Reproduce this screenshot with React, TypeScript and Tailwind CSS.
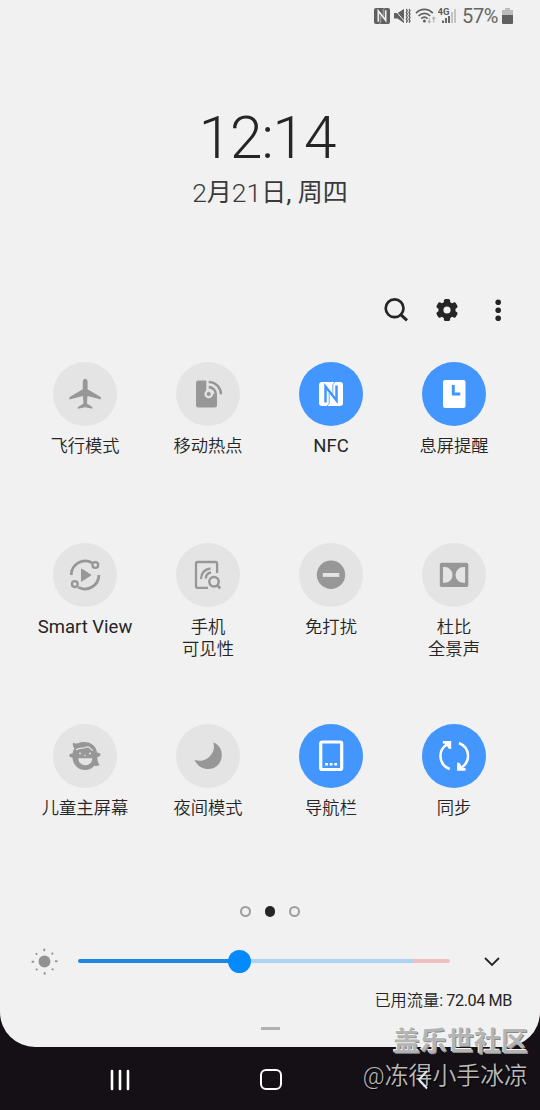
import type { ReactNode } from 'react';

const GREY = '#979797';
const BLUE = '#4296fd';
const OFF = '#e4e4e4';

function NfcMark({ size, fg, bg }: { size: number; fg: string; bg: string }) {
  return (
    <svg width={size} height={size} viewBox="0 0 24 24" fill="none">
      <rect width="24" height="24" rx="3" fill={fg} />
      <path d="M6.500 20.500V4.500L17.500 18.500V3.500" stroke={bg} strokeWidth="2.500" />
      <path d="M10.200 11V21.500L8 24M13.800 12V2.500L16 0" stroke={bg} strokeWidth=".8" />
    </svg>
  );
}

function Glyph({ children }: { children: ReactNode }) {
  return (
    <svg width="64" height="64" viewBox="-.5 -.5 64 64" fill="none">
      {children}
    </svg>
  );
}

const icons: Record<string, ReactNode> = {
  plane: (
    <Glyph>
      <path
        d="M31.700 16.200c-1.500 0-2.400 1.400-2.400 3.200v7.400L17 34c-1 .6-1.300 1.400-1.100 2.900l13.500-3.300.6 7.400-5 3.200c-.6.4-.7 1-.6 2l7.300-1.400 7.300 1.400c.1-1-.1-1.600-.6-2l-5-3.200.6-7.400 13.400 3.300c.2-1.500-.1-2.300-1.100-2.900l-12.200-7.200v-7.400c0-1.800-.9-3.200-2.400-3.200z"
        fill={GREY}
      />
    </Glyph>
  ),
  hotspot: (
    <Glyph>
      <rect x="19.500" y="18" width="21" height="27" rx="2.300" fill={GREY} />
      <path d="M29.800 16h12v15.500h-10l-2-2z" fill={OFF} />
      <circle cx="32.200" cy="31.500" r="4.300" fill={OFF} />
      <circle cx="32.200" cy="31.500" r="1.900" fill={GREY} stroke={GREY} strokeWidth=".4" />
      <path d="M32.200 24.600a7 7 0 0 1 7 7M32.200 19.500a12.200 12.200 0 0 1 12.200 12.200" stroke={GREY} strokeWidth="2.600" />
    </Glyph>
  ),
  nfc: <NfcMark size={24} fg="#fff" bg={BLUE} />,
  clock: (
    <Glyph>
      <rect x="20.500" y="17.500" width="22.500" height="28" rx="2" fill="#fff" />
      <path d="M30.800 22.500v9h7" stroke={BLUE} strokeWidth="3" />
    </Glyph>
  ),
  smartview: (
    <Glyph>
      <path d="M17.800 31.500A14 14 0 0 1 38.600 19.200M45.400 31.500A14 14 0 0 1 24.500 43.600" stroke={GREY} strokeWidth="2.800" />
      <circle cx="41.800" cy="21.500" r="2.900" stroke={GREY} strokeWidth="2.300" />
      <circle cx="21.300" cy="40.600" r="2.900" stroke={GREY} strokeWidth="2.300" />
      <path d="M28 25.500v12.200l9.500-6.100z" fill={GREY} stroke={GREY} strokeWidth="1" strokeLinejoin="round" />
    </Glyph>
  ),
  visible: (
    <Glyph>
      <path d="M40.600 29.500V20a1.500 1.500 0 0 0-1.500-1.500H21a1.500 1.500 0 0 0-1.500 1.500v22.800a1.500 1.500 0 0 0 1.500 1.500h10.500" stroke={GREY} strokeWidth="2.300" />
      <path d="M24.500 35.500c.2-5.500 3.500-9.500 9.500-10.500M29.300 35c.2-3.500 2-5.500 5.200-6" stroke={GREY} strokeWidth="2.300" />
      <circle cx="37.500" cy="38.200" r="4.700" stroke={GREY} strokeWidth="2.500" />
      <path d="M40.500 41.500l3.200 3.300" stroke={GREY} strokeWidth="2.600" />
    </Glyph>
  ),
  dnd: (
    <Glyph>
      <circle cx="31.500" cy="31.300" r="14.200" fill={GREY} />
      <rect x="23.300" y="29.500" width="16.500" height="3.900" fill={OFF} />
    </Glyph>
  ),
  dolby: (
    <Glyph>
      <rect x="17.300" y="19.300" width="28.500" height="24.200" rx="1.800" fill={GREY} />
      <path d="M20.500 23.600h1.800a7.800 7.800 0 0 1 0 15.600h-1.800zM42.600 23.600h-1.800a7.800 7.800 0 0 0 0 15.600h1.800z" fill={OFF} />
    </Glyph>
  ),
  kids: (
    <Glyph>
      <path
        d="M19.500 18c1.500 1.300 3 1.200 5 .7 4-1.700 10.500-1.600 14 1 2.700 1.800 4.500 4.800 5 8.300 2 .2 3.500.9 3.500 2.200 0 1.200-1.300 2-3.100 2.200 0 3.200.2 5 2.300 8.200-2 1-4 1.200-5.500.6-2.500 3-5.500 4.300-9.200 4.300-6.800 0-12-5.200-12.500-12.200-1.800-.2-3.300-.9-3.300-2.200 0-1.300 1.300-2.200 3.300-2.200.3-2 1-3.700 2-5.200-1.500-1.200-2-3-1.500-5.200z"
        fill={GREY}
      />
      <path d="M22.500 25.500c3.500-3 6.500-1 9.500-2.500 1.500-.8 3-.8 4 .2 1.200 1.200 2 2.300 3.500 2.800" stroke={OFF} strokeWidth="1.200" />
      <circle cx="26.500" cy="29" r="1" fill={OFF} />
      <circle cx="36.500" cy="29" r="1" fill={OFF} />
      <circle cx="31.500" cy="31" r=".8" fill={OFF} />
      <path d="M24.800 33.700h14c-.2 4.300-2.800 7-7 7s-6.800-2.700-7-7z" fill={OFF} />
    </Glyph>
  ),
  moon: (
    <Glyph>
      <path d="M36.800 17.800c5.500 2.500 8.500 7 8.500 12.700 0 7.800-5.700 14-13.300 14-6.300 0-11.500-3.300-14-9.200 4 1.600 8.500 1.200 12-.8 6-3.500 8.800-10 6.800-16.700z" fill={GREY} />
    </Glyph>
  ),
  navbar: (
    <Glyph>
      <rect x="21.200" y="17.500" width="21" height="27.500" rx="1.500" stroke="#fff" strokeWidth="3.200" />
      <path d="M25.600 38.500h2.800v2.600h-2.800zM30.200 38.500h2.800v2.600h-2.800zM34.800 38.500h2.800v2.600h-2.800z" fill="#fff" />
    </Glyph>
  ),
  sync: (
    <Glyph>
      <path d="M27.200 44.500c-5.500-2.200-9.300-7-9.300-13.200 0-4.300 2.500-8.600 6.200-11.300M36.500 18.500c5.300 2.200 9.100 7 9.100 13 0 4.500-2.500 8.700-6 11.300" stroke="#fff" strokeWidth="2.500" />
      <path d="M20.300 16.400h8.400v8.200l-2.500-.3-3-4.900-2.900-.3zM43 46.300h-8.400v-8.200l2.500.3 3 4.900 2.900.3z" fill="#fff" />
    </Glyph>
  ),
};

type Tile = { icon: string; label: string[]; on?: boolean; latin?: boolean };

const tiles: Tile[] = [
  { icon: 'plane', label: ['飞行模式'] },
  { icon: 'hotspot', label: ['移动热点'] },
  { icon: 'nfc', label: ['NFC'], on: true, latin: true },
  { icon: 'clock', label: ['息屏提醒'], on: true },
  { icon: 'smartview', label: ['Smart View'], latin: true },
  { icon: 'visible', label: ['手机', '可见性'] },
  { icon: 'dnd', label: ['免打扰'] },
  { icon: 'dolby', label: ['杜比', '全景声'] },
  { icon: 'kids', label: ['儿童主屏幕'] },
  { icon: 'moon', label: ['夜间模式'] },
  { icon: 'navbar', label: ['导航栏'], on: true },
  { icon: 'sync', label: ['同步'], on: true },
];

function StatusBar() {
  return (
    <div className="flex h-8 items-center justify-end pr-[27px] text-[#666]">
      <NfcMark size={16} fg="#606060" bg="#f1f1f1" />
      <svg className="ml-[4px]" width="17" height="16" viewBox="0 0 17 16">
        <path d="M0 5h3.500L10 1v14l-6.500-4.500H0z" fill="#606060" />
        <path d="M.500 1.500l11 13" stroke="#f1f1f1" strokeWidth="1" />
        <path d="M12.300 1l1 1.700-1 1.700 1 1.700-1 1.700 1 1.700-1 1.700 1 1.700-1 1.700M15 1l1 1.700-1 1.700 1 1.700-1 1.700 1 1.700-1 1.700 1 1.700-1 1.700" fill="none" stroke="#606060" strokeWidth="1.300" />
      </svg>
      <svg className="ml-[4px]" width="23" height="18" viewBox="0 0 23 18">
        <path d="M1 6.200c4.800-5 12-5 16.800 0M3.600 9c3.400-3.500 8.200-3.500 11.600 0M6.300 11.600c1.800-1.900 4.400-1.900 6.200 0" fill="none" stroke="#606060" strokeWidth="1.700" />
        <circle cx="9.400" cy="14" r="1.500" fill="#606060" />
        <path d="M14.300 11v4.500M12.800 14l1.500 1.800 1.500-1.800M18.700 15.500v-5M17.200 12l1.500-1.800 1.500 1.800" fill="none" stroke="#b0b0b0" strokeWidth="1.100" />
      </svg>
      <svg width="19" height="18" viewBox="0 0 19 18">
        <text x="-.5" y="8" fontFamily="Roboto" fontSize="9.500" fontWeight="700" fill="#5c5c5c">4G</text>
        <path d="M5 13.500v2.500M8 11v5M11 9v7" stroke="#606060" strokeWidth="1.900" />
        <path d="M14 5v11M17 2v14" stroke="#c3c3c3" strokeWidth="1.900" />
      </svg>
      <span className="ml-[5px] text-[20px] leading-8 tracking-[-0.4px]">57%</span>
      <svg className="ml-[4px]" width="11" height="16" viewBox="0 0 11 16">
        <path d="M3 0h5v2h3v6H0V2h3z" fill="#bbb" />
        <path d="M0 7h11v8a1 1 0 0 1-1 1H1a1 1 0 0 1-1-1z" fill="#606060" />
      </svg>
    </div>
  );
}

function Toolbar() {
  return (
    <div className="flex h-[30px] items-center justify-end gap-[21px] pr-[27px]">
      <svg width="30" height="30" viewBox="0 0 30 30">
        <circle cx="13.600" cy="13.300" r="8.900" fill="none" stroke="#252525" strokeWidth="2.700" />
        <path d="M19.700 19.600l6.300 5.700" stroke="#252525" strokeWidth="3" />
      </svg>
      <svg width="30" height="30" viewBox="0 0 30 30">
        <g fill="#252525">
          <circle cx="15" cy="15" r="8.600" />
          <rect x="11.900" y="3.900" width="6.200" height="22.200" rx="1.700" />
          <rect x="11.900" y="3.900" width="6.200" height="22.200" rx="1.700" transform="rotate(60 15 15)" />
          <rect x="11.900" y="3.900" width="6.200" height="22.200" rx="1.700" transform="rotate(120 15 15)" />
        </g>
        <circle cx="15" cy="15" r="3.600" fill="#f1f1f1" />
      </svg>
      <svg width="30" height="30" viewBox="0 0 30 30" fill="#252525">
        <circle cx="15.200" cy="7.200" r="2.800" />
        <circle cx="15.200" cy="15.200" r="2.800" />
        <circle cx="15.200" cy="23.200" r="2.800" />
      </svg>
    </div>
  );
}

function QuickTile({ icon, label, on, latin }: Tile) {
  return (
    <div className="flex h-[181px] flex-col items-center">
      <div className={`flex size-[64px] shrink-0 items-center justify-center rounded-full ${on ? 'bg-[#4296fd]' : 'bg-[#e4e4e4]'}`}>
        {icons[icon]}
      </div>
      <div className={`mt-[8.500px] text-center leading-[22px] whitespace-nowrap text-[#252525] ${latin ? 'text-[18.500px]' : 'text-[17.300px] font-[350]'}`}>
        {label.map((line) => (
          <div key={line}>{line}</div>
        ))}
      </div>
    </div>
  );
}

function Brightness() {
  return (
    <div className="flex h-[30px] items-center">
      <svg className="ml-[29px]" width="31" height="30" viewBox="0 0 31 30" fill="#929292">
        <circle cx="15.500" cy="15.500" r="5.900" />
        <g stroke="#929292" strokeWidth="2" strokeLinecap="round">
          <path d="M15.300 3.500v.800M15.700 26.900v.800M3.500 15.800h.800M26.800 15.300h.800M7.400 7.900l.2.200M23.200 7.700l.2-.2M7.600 23.600l.2-.2M23.500 23.200l.2.200" />
        </g>
      </svg>
      <div className="relative ml-[17.500px] flex h-1 w-[372px] overflow-visible">
        <div className="w-[161px] rounded-l-full bg-[#1d86e2]" />
        <div className="w-[175px] bg-[#aed3f0]" />
        <div className="w-[36px] rounded-r-full bg-[#efc0c0]" />
        <div className="absolute top-[-9px] left-[150.500px] size-[22.500px] rounded-full bg-[#038aff]" />
      </div>
      <svg className="ml-[33.500px]" width="18" height="12" viewBox="0 0 18 12">
        <path d="M2 3l7 7 7-7" fill="none" stroke="#252525" strokeWidth="1.800" />
      </svg>
    </div>
  );
}

export default function App() {
  return (
    <div className="relative flex h-[1110px] w-[540px] flex-col overflow-hidden bg-[#151015] font-['Roboto','Noto_Sans_CJK_SC',sans-serif]">
      <div className="flex h-[1047px] flex-col rounded-b-[35px] bg-[#f1f1f1]">
        <StatusBar />
        <div className="mt-[71px] h-[70px] pr-[6px] text-center text-[58.500px] leading-[70px] font-light tracking-[-1.100px] text-[#252525]">12:14</div>
        <div className="mt-[4px] flex h-[32px] items-center justify-center text-[25px] leading-[32px] font-light whitespace-pre text-[#3a3a3a]">
          <span className="text-[26.500px]">2</span>
          <span className="font-normal">月</span>
          <span className="text-[26.500px]">21</span>
          <span className="font-normal">日</span>
          <span className="text-[26px] font-normal">, </span>
          <span className="font-normal">周四</span>
        </div>
        <div className="mt-[86px]">
          <Toolbar />
        </div>
        <div className="mx-[23.500px] mt-[37px] grid w-[492px] grid-cols-4">
          {tiles.map((tile) => (
            <QuickTile key={tile.icon} {...tile} />
          ))}
        </div>
        <div className="mt-[1px] flex h-[11px] items-center justify-center gap-[14px]">
          <div className="size-[10.500px] rounded-full border-2 border-[#9d9d9d]" />
          <div className="size-[10.500px] rounded-full bg-[#252525]" />
          <div className="size-[10.500px] rounded-full border-2 border-[#9d9d9d]" />
        </div>
        <div className="mt-[29px]">
          <Brightness />
        </div>
        <div className="mt-[14px] flex justify-end pr-[28px] text-[16.200px] leading-[22px] whitespace-pre text-[#252525]">
          <span className="font-[350]">已用流量</span>
          <span className="tracking-[-.4px]">: 72.04 MB</span>
        </div>
        <div className="mx-auto mt-[15px] h-[2.500px] w-[19px] bg-[#b0b0b0]" />
      </div>
      <div className="relative z-10 flex h-[63px] items-center pt-[2px]">
        <svg className="ml-[109px]" width="22" height="22" viewBox="0 0 22 22">
          <path d="M3 2v18M11 2v18M19 2v18" stroke="#fff" strokeWidth="2.600" strokeLinecap="round" />
        </svg>
        <div className="ml-[129px] h-[21px] w-[22px] rounded-[6px] border-2 border-white" />
        <svg className="ml-[134px]" width="14" height="22" viewBox="0 0 14 22">
          <path d="M11 2L3 10.500l8 9" fill="none" stroke="#e8e8e8" strokeWidth="2" />
        </svg>
      </div>
      <div className="absolute top-[1025px] right-[12px] flex flex-col items-end whitespace-nowrap">
        <div className="text-[27px] leading-[34px] font-bold text-[#b4b4b4] [text-shadow:-1px_-1px_0_#f4f4f4,1px_1px_0_#8a8a8a]">盖乐世社区</div>
        <div className="text-[23.900px] leading-[34px] font-[350] text-[#b9b9b9] [text-shadow:1px_1px_1px_#000]">@冻得小手冰凉</div>
      </div>
    </div>
  );
}
